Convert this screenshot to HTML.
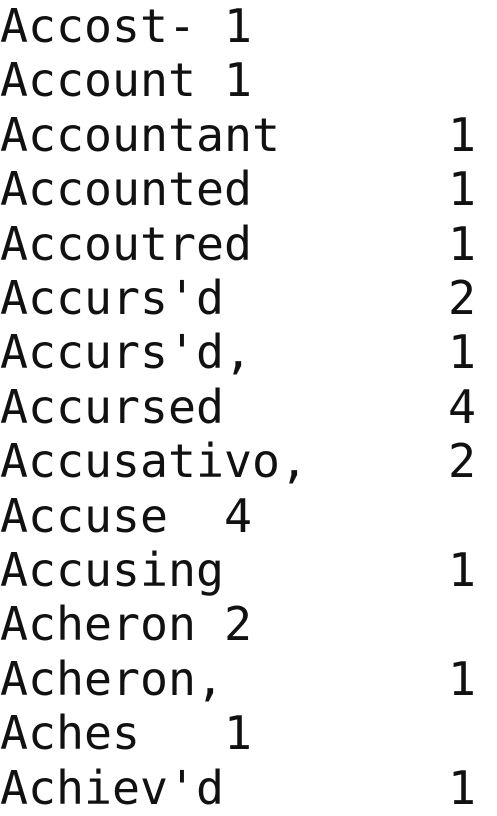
<!DOCTYPE html>
<html><head><meta charset="utf-8"><style>
html,body{margin:0;padding:0;background:#fff;width:497px;height:816px;overflow:hidden}
pre{margin:0;position:relative;top:-1px;left:0;font-family:"DejaVu Sans Mono",monospace;font-size:46.5px;line-height:54.4px;color:#111;tab-size:8;-moz-tab-size:8}
</style></head><body><pre>Accost- 1
Account 1
Accountant	1
Accounted	1
Accoutred	1
Accurs'd	2
Accurs'd,	1
Accursed	4
Accusativo,	2
Accuse	4
Accusing	1
Acheron 2
Acheron,	1
Aches	1
Achiev'd	1</pre></body></html>
